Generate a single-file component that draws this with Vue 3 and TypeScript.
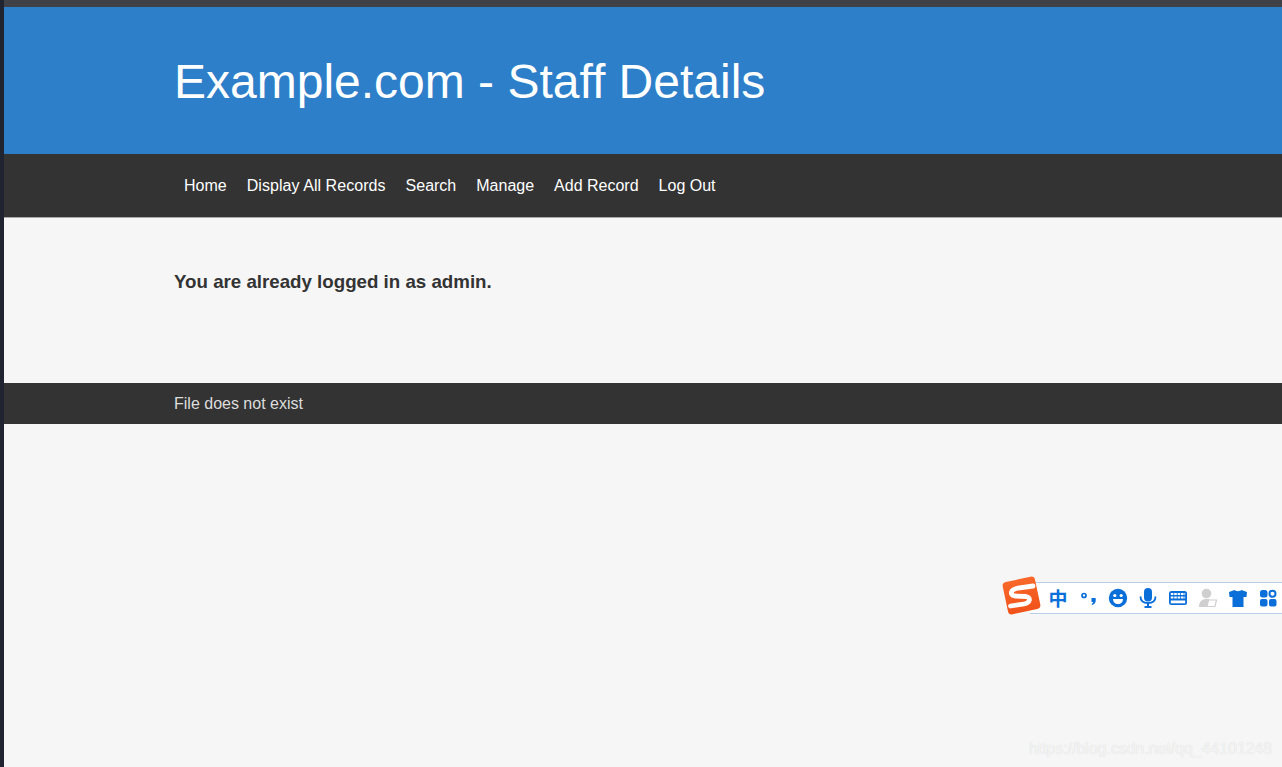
<script setup lang="ts">
const links: string[] = ['Home', 'Display All Records', 'Search', 'Manage', 'Add Record', 'Log Out']
</script>

<template>
  <div class="screen">
    <div class="edge"></div>
    <div class="page">
      <div class="topline"></div>
      <header class="banner">
        <div class="wrap"><h1>Example.com - Staff Details</h1></div>
      </header>
      <nav class="nav">
        <div class="wrap links">
          <a v-for="l in links" :key="l" href="#">{{ l }}</a>
        </div>
      </nav>
      <main class="content">
        <div class="wrap"><p>You are already logged in as admin.</p></div>
      </main>
      <footer class="foot">
        <div class="wrap">File does not exist</div>
      </footer>
    </div>

    <div class="ime">
      <svg class="logo" width="44" height="42" viewBox="0 0 44 42">
        <defs>
          <linearGradient id="lg" x1="0" y1="0" x2="0" y2="1">
            <stop offset="0" stop-color="#f9682a" />
            <stop offset="1" stop-color="#f0521a" />
          </linearGradient>
        </defs>
        <rect x="5" y="4" width="33" height="33" rx="4" fill="url(#lg)" transform="rotate(-12 21.5 20.5)" />
        <path d="M33 11 L18 13 C10 14.500 9.500 20 15 21 L26 21.500 C31.500 22.500 30 28 24 29 L10.500 31" fill="none" stroke="#fff" stroke-width="4.800" stroke-linecap="round" />
      </svg>
      <div class="tray">
        <span class="zh">中</span>
        <svg class="ic" width="20" height="20" viewBox="0 0 20 20">
          <circle cx="6" cy="7.500" r="2" fill="none" stroke="#0a6fd8" stroke-width="1.700" />
          <path d="M13.500 10 h4.200 v2.800 c0 1.800-1.200 3.200-3.400 4.200 l-.7-1 c1-.6 1.500-1.100 1.600-1.900 h-1.700z" fill="#0a6fd8" />
        </svg>
        <svg class="ic" width="20" height="20" viewBox="0 0 20 20">
          <circle cx="10" cy="10" r="9.200" fill="#0a6fd8" />
          <circle cx="6.800" cy="7.500" r="1.600" fill="#fff" />
          <circle cx="13.200" cy="7.500" r="1.600" fill="#fff" />
          <path d="M5 11 h10 c0 3-2.200 5-5 5 s-5-2-5-5z" fill="#fff" />
        </svg>
        <svg class="ic" width="20" height="20" viewBox="0 0 20 20">
          <rect x="6" y="0" width="8" height="13.500" rx="4" fill="#0a6fd8" />
          <path d="M2.500 8.500 c0 4.500 3 6.500 7.500 6.500 s7.500-2 7.500-6.500" fill="none" stroke="#0a6fd8" stroke-width="1.800" />
          <rect x="9" y="15" width="2" height="3" fill="#0a6fd8" />
          <rect x="6.500" y="18" width="7" height="2" fill="#0a6fd8" />
        </svg>
        <svg class="ic" width="20" height="20" viewBox="0 0 20 20">
          <rect x="1" y="3" width="18" height="14" rx="2.500" fill="#0a6fd8" />
          <path d="M2.800 6 h14.400 M2.800 9.500 h14.400" stroke="#fff" stroke-width="2.200" stroke-dasharray="2.600 .8" />
          <rect x="2.800" y="12.500" width="14.400" height="2.800" fill="#fff" />
        </svg>
        <svg class="ic" width="20" height="20" viewBox="0 0 20 20">
          <circle cx="8.500" cy="5.500" r="4.800" fill="#cfcfcf" />
          <path d="M1 19 c0-5.500 3-8 7.500-8 h3 l-2.500 8z" fill="#cfcfcf" />
          <path d="M10.500 12 h8 l-1.500 6.500 h-8z" fill="#fff" stroke="#cfcfcf" stroke-width="1.200" />
        </svg>
        <svg class="ic" width="20" height="20" viewBox="0 0 20 20">
          <path d="M6.500 2 C8 3.500 12 3.500 13.500 2 L19 4 L18.500 9 L15.500 9 V19 H4.500 V9 L1.500 9 L1 4z" fill="#0a6fd8" />
        </svg>
        <svg class="ic last" width="20" height="20" viewBox="0 0 20 20">
          <rect x="2" y="2" width="7.500" height="7.500" rx="2.500" fill="#0a6fd8" />
          <circle cx="14.500" cy="5.750" r="3" fill="#fff" stroke="#0a6fd8" stroke-width="2" />
          <rect x="2" y="11" width="7.500" height="7.500" rx="2" fill="#0a6fd8" />
          <rect x="11" y="11" width="7.500" height="7.500" rx="2" fill="#0a6fd8" />
        </svg>
      </div>
    </div>

    <div class="mark">https://blog.csdn.net/qq_44101248</div>
  </div>
</template>

<style scoped>
.screen {
  display: flex;
  height: 767px;
  overflow: hidden;
  position: relative;
  font-family: "Liberation Sans", Arial, sans-serif;
  font-size: 16px;
  color: #333;
  background: #f6f6f6;
}
.edge {
  width: 4px;
  flex: none;
  background: #1f2430;
}
.page {
  flex: 1;
  min-width: 0;
}
.topline {
  height: 7px;
  background: #404147;
}
.wrap {
  padding-left: 170px;
}
.banner {
  height: 147px;
  background: #2d7fca;
  display: flex;
  align-items: center;
}
.banner h1 {
  margin: 0;
  font-size: 48px;
  font-weight: 400;
  line-height: 1.1;
  color: #fff;
  padding-top: 3px;
}
.nav {
  height: 64px;
  box-sizing: border-box;
  background: #333;
  border-bottom: 1px solid #a8a8a8;
  display: flex;
  align-items: center;
}
.links {
  display: flex;
  padding-top: 1px;
}
.links a {
  padding: 0 10px;
  color: #fff;
  text-decoration: none;
  line-height: 22px;
}
.links a:nth-child(2) {
  letter-spacing: 0.055px;
}
.content {
  height: 165px;
  box-sizing: border-box;
  padding-top: 53px;
}
.content p {
  margin: 0;
  font-size: 18.72px;
  line-height: 22px;
  font-weight: 700;
  color: #333;
}
.foot {
  height: 41px;
  background: #333;
  color: #ddd;
  display: flex;
  align-items: center;
}
.ime {
  position: absolute;
  left: 1000px;
  top: 575px;
  width: 282px;
  height: 42px;
}
.logo {
  position: absolute;
  left: 0;
  top: 0;
  z-index: 1;
}
.tray {
  position: absolute;
  left: 30px;
  top: 7px;
  right: 0;
  height: 32px;
  box-sizing: border-box;
  background: #fff;
  border-top: 1px solid #b9cfe8;
  border-bottom: 1px solid #b9cfe8;
  padding-left: 18px;
  display: flex;
  align-items: center;
}
.zh {
  flex: none;
  width: 20px;
  font-family: "Noto Sans CJK SC", sans-serif;
  font-size: 19px;
  font-weight: 700;
  line-height: 20px;
  text-align: center;
  color: #0a6fd8;
  margin-right: 10px;
}
.ic {
  flex: none;
  margin-right: 10px;
}
.ic.last {
  margin-right: 0;
}
.mark {
  position: absolute;
  left: 1029px;
  top: 739px;
  font-size: 15.85px;
  line-height: 20px;
  white-space: nowrap;
  color: #f4f4f4;
  text-shadow: 0 0 1px #d6d6d6;
}
</style>
